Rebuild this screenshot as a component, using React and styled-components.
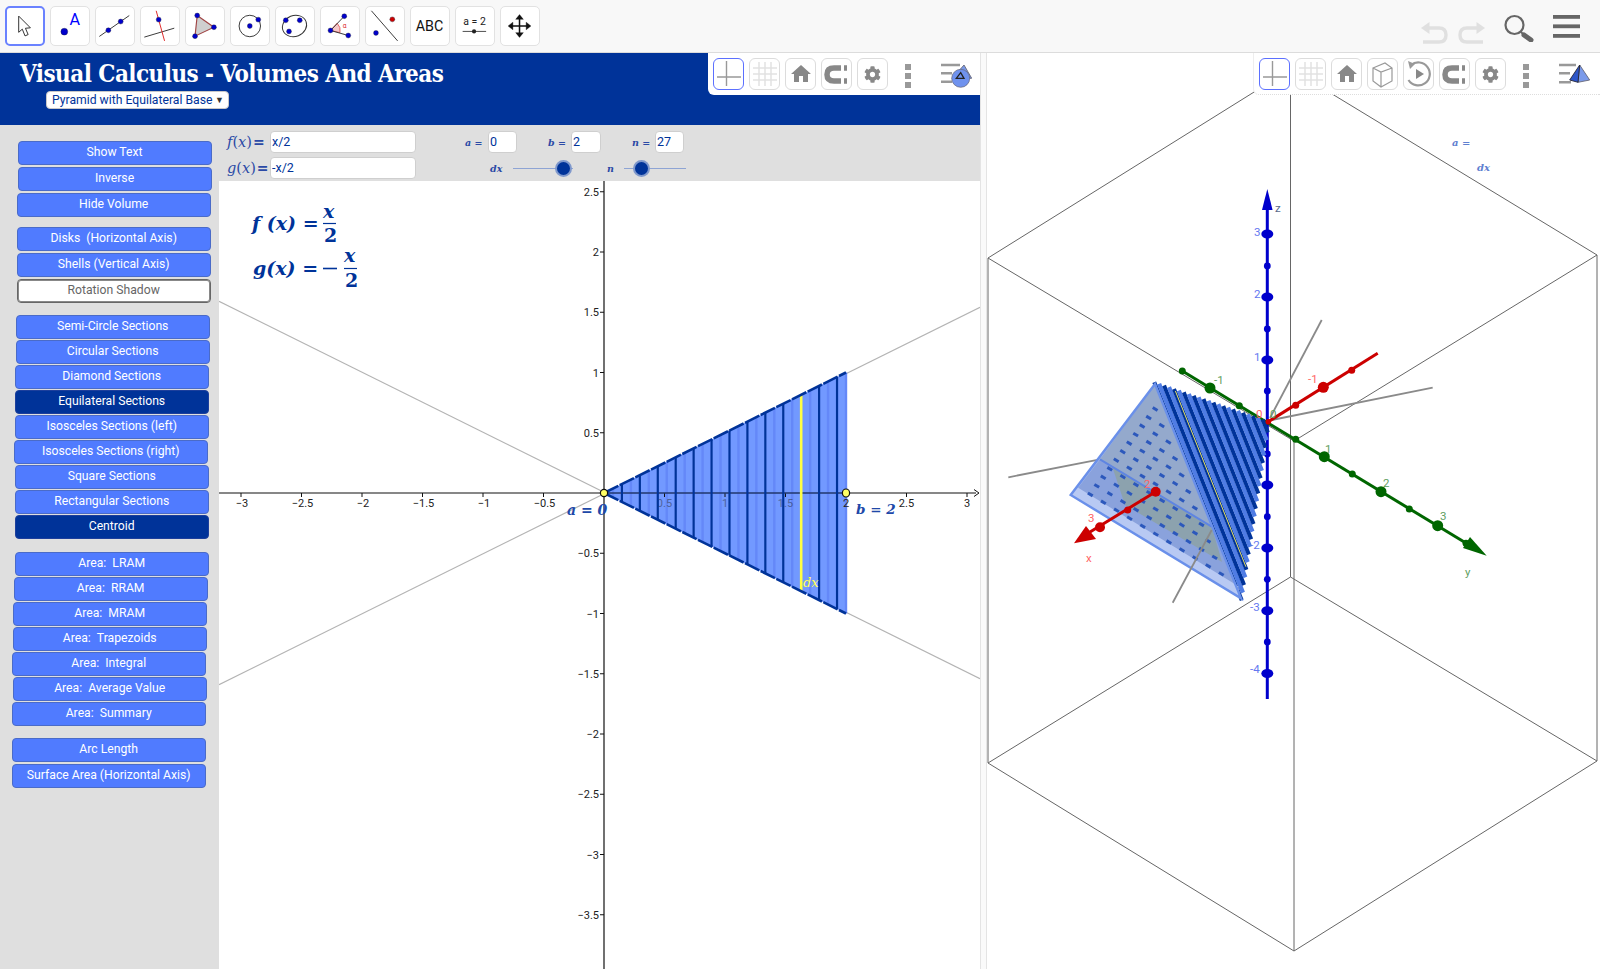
import React from 'react';
import styled, { createGlobalStyle } from 'styled-components';
import { MdHome } from 'react-icons/md';
import { FaCog } from 'react-icons/fa';

const GlobalStyle = createGlobalStyle`
  html, body {
    margin: 0;
    padding: 0;
    background: #fff;
    font-family: Roboto, "Liberation Sans", sans-serif;
  }
`;

const BLUE = '#003399';
const BUTTON_BLUE = '#507bff';
const MATH_FONT = '"DejaVu Serif", "Liberation Serif", serif';

const Page = styled.div`
  width: 1600px;
  height: 969px;
  display: flex;
  flex-direction: column;
  overflow: hidden;
`;

const Toolbar = styled.header`
  height: 53px;
  flex: none;
  box-sizing: border-box;
  display: flex;
  align-items: flex-start;
  gap: 5px;
  padding: 6px 0 0 5px;
  background: #f8f8f8;
  border-bottom: 1px solid #dcdcdc;
`;

const ToolButton = styled.div`
  width: 40px;
  height: 40px;
  box-sizing: border-box;
  flex: none;
  background: #fff;
  border: ${(p) => (p.$active ? '2px solid #6a82ff' : '1px solid #e2e2e2')};
  border-radius: 5px;
  svg {
    display: block;
    width: 100%;
    height: 100%;
  }
`;

const ToolbarActions = styled.div`
  margin-left: auto;
  display: flex;
  align-items: flex-start;
  height: 41px;
  padding: 7px 20px 0 0;
  box-sizing: border-box;
  svg {
    display: block;
    flex: none;
  }
`;

const ActionSlot = styled.div`
  margin-left: ${(p) => p.$left}px;
  margin-top: ${(p) => p.$top}px;
`;

const Workspace = styled.div`
  flex: 1;
  display: flex;
  min-height: 0;
`;

const LeftPane = styled.section`
  position: relative;
  width: 980px;
  flex: none;
  display: flex;
  flex-direction: column;
`;

const Splitter = styled.div`
  width: 7px;
  flex: none;
  background: #fafafa;
  border-left: 1px solid #e4e4e4;
  border-right: 1px solid #e4e4e4;
  box-sizing: border-box;
`;

const RightPane = styled.section`
  position: relative;
  flex: 1;
  overflow: hidden;
`;

const TitleBar = styled.div`
  height: 72px;
  flex: none;
  box-sizing: border-box;
  background: ${BLUE};
  padding: 5px 0 0 20px;
`;

const Title = styled.h1`
  margin: 0;
  color: #fff;
  font: bold 24px/32px "DejaVu Serif Condensed", "DejaVu Serif", serif;
  letter-spacing: -0.55px;
  white-space: nowrap;
`;

const ShapeSelect = styled.div`
  margin: 1px 0 0 26px;
  width: 183px;
  height: 18px;
  box-sizing: border-box;
  display: flex;
  align-items: center;
  justify-content: space-between;
  padding: 0 4px 1px 5px;
  background: #fff;
  border: 1px solid #c8c8c8;
  border-radius: 4px;
  color: ${BLUE};
  font-size: 12.2px;
  white-space: nowrap;
  span:last-child {
    color: #333;
    font-size: 9px;
  }
`;

const Body = styled.div`
  flex: 1;
  display: flex;
  min-height: 0;
`;

const Sidebar = styled.nav`
  width: 219px;
  flex: none;
  box-sizing: border-box;
  background: #dfdfdf;
  padding-top: 16px;
`;

const ButtonGroup = styled.div`
  display: flex;
  flex-direction: column;
  gap: ${(p) => p.$gap}px;
  margin-bottom: ${(p) => p.$after}px;
`;

const SideButton = styled.button`
  width: 194px;
  height: 24px;
  flex: none;
  margin: 0 0 0 ${(p) => p.$left}px;
  padding: 0 0 ${(p) => p.$lift}px;
  box-sizing: border-box;
  border-radius: 4px;
  font: 12.2px Roboto, sans-serif;
  color: ${(p) => (p.$variant === 'off' ? '#666' : '#fff')};
  background: ${(p) =>
    p.$variant === 'on' ? BLUE : p.$variant === 'off' ? '#fff' : BUTTON_BLUE};
  border: ${(p) =>
    p.$variant === 'off'
      ? '1px solid #666'
      : p.$variant === 'on'
      ? '1px solid #1d3f9c'
      : '1px solid #4a6bc8'};
  box-shadow: ${(p) => (p.$variant === 'off' ? 'inset 0 0 0 1px #888' : 'none')};
`;

const Content = styled.div`
  flex: 1;
  display: flex;
  flex-direction: column;
  min-width: 0;
`;

const InputStrip = styled.div`
  height: 56px;
  flex: none;
  box-sizing: border-box;
  background: #dfdfdf;
  padding: 6px 0 0 9px;
  display: flex;
  flex-direction: column;
  gap: 4px;
`;

const InputRow = styled.div`
  display: flex;
  align-items: center;
  height: 22px;
`;

const FnLabel = styled.span`
  width: 43px;
  margin-left: -1px;
  flex: none;
  font: italic 14.5px ${MATH_FONT};
  color: #2b4aa6;
  white-space: nowrap;
  i {
    font-style: normal;
  }
  b {
    font-style: normal;
    font-weight: bold;
    font-size: 14px;
    margin-left: 1px;
  }
`;

const ParamLabel = styled.span`
  width: ${(p) => p.$width}px;
  margin-left: ${(p) => p.$left}px;
  flex: none;
  font: italic bold 9.5px ${MATH_FONT};
  color: #2b4aa6;
  white-space: nowrap;
`;

const Field = styled.input`
  width: ${(p) => p.$width}px;
  height: 22px;
  flex: none;
  box-sizing: border-box;
  margin-left: ${(p) => p.$left || 0}px;
  padding: 0 0 1px 1px;
  background: #fff;
  border: 1px solid #cfcfcf;
  border-radius: 4px;
  outline: none;
  font: 12.5px Roboto, sans-serif;
  color: ${BLUE};
`;

const SliderTrack = styled.div`
  position: relative;
  width: ${(p) => p.$width}px;
  height: 1px;
  margin-left: ${(p) => p.$left}px;
  flex: none;
  background: #8ea4d4;
`;

const SliderKnob = styled.span`
  position: absolute;
  top: -8px;
  width: 13px;
  height: 13px;
  border-radius: 50%;
  border: 2px solid #7f98cc;
  background: ${BLUE};
`;

const PlotArea = styled.div`
  flex: 1;
  min-height: 0;
  background: #fff;
  svg {
    display: block;
    width: 100%;
    height: 100%;
  }
`;

const StyleBar = styled.div`
  position: absolute;
  top: 0;
  right: 0;
  height: 42px;
  box-sizing: border-box;
  display: flex;
  align-items: flex-start;
  gap: 5px;
  padding: 5px ${(p) => (p.$framed ? 2 : 0)}px 0 5px;
  background: #fff;
  border-bottom-left-radius: 6px;
  border-bottom: ${(p) => (p.$framed ? '1px dotted #ddd' : 'none')};
  border-left: ${(p) => (p.$framed ? '1px solid #eee' : 'none')};
`;

const StyleButton = styled.div`
  width: 31px;
  height: 32px;
  box-sizing: border-box;
  flex: none;
  display: flex;
  align-items: center;
  justify-content: center;
  border: 1px solid ${(p) => (p.$active ? '#5c70ff' : '#dcdcdc')};
  border-radius: 6px;
  color: #888;
  svg {
    display: block;
  }
`;

const MoreDots = styled.div`
  width: 6px;
  height: 24px;
  margin: 6px 0 0 12px;
  flex: none;
  display: flex;
  flex-direction: column;
  justify-content: space-between;
  span {
    height: 6px;
    background: #999;
  }
`;

const PerspectiveIcon = styled.div`
  width: 31px;
  height: 28px;
  margin: 3px 8px 0 25px;
  flex: none;
`;

const SceneCanvas = styled.svg`
  display: block;
  width: 100%;
  height: 100%;
`;

/* toolbar icons, all drawn on a 40 x 40 box */
const Dot = ({ x, y, r = 2.6, c = '#0000cc' }) => (
  <circle cx={x} cy={y} r={r} fill={c} stroke="#223" strokeWidth="0.4" />
);

const toolIcons = [
  <path key="move" d="M13 9 L13 27 L17 23.5 L20 31 L23.5 29.5 L20.5 22.5 L26 22 Z" fill="#fff" stroke="#333" strokeWidth="1.1" />,
  <g key="point">
    <Dot x={14} y={26} r={3.6} />
    <text x={19.5} y={19} fontSize="17" fontFamily="Roboto, sans-serif" fill="#0000ff">A</text>
  </g>,
  <g key="line">
    <line x1="3.5" y1="31" x2="35" y2="9" stroke="#333" strokeWidth="1" />
    <Dot x={13} y={24.5} />
    <Dot x={26} y={15.3} />
  </g>,
  <g key="perp">
    <line x1="3.5" y1="31.7" x2="35" y2="22.3" stroke="#333" strokeWidth="1" />
    <line x1="16" y1="4" x2="24.8" y2="35.7" stroke="#dd2222" strokeWidth="1" />
    <Dot x={18.6} y={13.3} />
  </g>,
  <g key="poly">
    <polygon points="11.8,9 29.4,21.3 9.5,30.7" fill="#cfcfcf" stroke="#a04444" strokeWidth="1.2" />
    <Dot x={11.8} y={9} />
    <Dot x={29.4} y={21.3} />
    <Dot x={9.5} y={30.7} />
  </g>,
  <g key="circle">
    <circle cx="19.8" cy="20" r="11.3" fill="none" stroke="#333" strokeWidth="1" />
    <Dot x={19.8} y={20} />
    <Dot x={28.7} y={13.3} />
  </g>,
  <g key="conic">
    <ellipse cx="19.5" cy="20" rx="13" ry="11" transform="rotate(-22 19.5 20)" fill="none" stroke="#333" strokeWidth="1" />
    <Dot x={10.3} y={14} />
    <Dot x={25} y={14} />
    <Dot x={13.7} y={25.7} />
  </g>,
  <g key="angle">
    <path d="M10 24.7 L17 17 A11 11 0 0 1 20 27 Z" fill="#f5c8c8" stroke="#dd4444" strokeWidth="0.8" />
    <path d="M24.5 9.7 L10 24.7 L28.7 30" fill="none" stroke="#333" strokeWidth="1" />
    <Dot x={24.5} y={9.7} />
    <Dot x={10} y={24.7} />
    <Dot x={28.7} y={30} />
    <text x={23} y={22} fontSize="7" fontFamily="Roboto, sans-serif" fill="#dd3333">α</text>
  </g>,
  <g key="reflect">
    <line x1="5.7" y1="4" x2="33.3" y2="35.7" stroke="#333" strokeWidth="1" />
    <Dot x={27.7} y={13} c="#cc0000" />
    <Dot x={10.5} y={27.3} />
  </g>,
  <text key="abc" x="19.5" y="25.5" textAnchor="middle" fontSize="15" fontFamily="Roboto, sans-serif" fill="#111">ABC</text>,
  <g key="slider">
    <text x="19.5" y="18.5" textAnchor="middle" fontSize="11" fontFamily="Roboto, sans-serif" fill="#222">a = 2</text>
    <line x1="7" y1="25.7" x2="31.7" y2="25.7" stroke="#444" strokeWidth="1" />
    <circle cx="19" cy="25.7" r="2.2" fill="#222" />
  </g>,
  <g key="pan" fill="#111" stroke="#111">
    <path d="M19.5 11 V29 M10.5 20 H28.5" strokeWidth="1.6" />
    <path d="M19.5 8 L15.5 13 H23.5 Z M19.5 32 L15.5 27 H23.5 Z M7.5 20 L12.5 16 V24 Z M31.5 20 L26.5 16 V24 Z" strokeWidth="0.4" />
  </g>,
];

const UndoIcon = ({ flip }) => (
  <svg width="27" height="22" viewBox="0 0 27 22" style={flip ? { transform: 'scaleX(-1)' } : undefined}>
    <path d="M8 6 H18 Q25 6 25 13 Q25 20 18 20 H2" fill="none" stroke="#e0e0e0" strokeWidth="3.4" />
    <path d="M0 6 L8.5 0 V12 Z" fill="#e0e0e0" />
  </svg>
);

const SearchIcon = () => (
  <svg width="30" height="29" viewBox="0 0 30 29">
    <circle cx="10.5" cy="12" r="9" fill="none" stroke="#666" strokeWidth="2.2" />
    <path d="M17 19 L19 21 M20 22 L26.5 26.5" stroke="#666" strokeWidth="1.8" fill="none" />
    <path d="M20 22 L27 27" stroke="#666" strokeWidth="5" strokeLinecap="round" />
  </svg>
);

const MenuIcon = () => (
  <svg width="27" height="23" viewBox="0 0 27 23">
    <rect y="0" width="27" height="3.8" fill="#666" />
    <rect y="9.4" width="27" height="3.8" fill="#666" />
    <rect y="19" width="27" height="3.8" fill="#666" />
  </svg>
);

/* style bar icons */
const AxesGlyph = () => (
  <svg width="29" height="30" viewBox="0 0 29 30">
    <path d="M12.5 2 V27 M3 18 H27" stroke="#999" strokeWidth="1.4" fill="none" />
  </svg>
);

const GridGlyph = () => (
  <svg width="29" height="30" viewBox="0 0 29 30">
    <path d="M9 3 V27 M15 3 V27 M21 3 V27 M3 9 H27 M3 15 H27 M3 21 H27" stroke="#e2e2e2" strokeWidth="1.5" fill="none" />
  </svg>
);

const CubeGlyph = () => (
  <svg width="29" height="30" viewBox="0 0 29 30">
    <path d="M5 9 L17 4 L24 9 V22 L13 28 L5 22 Z M5 9 L13 13 L24 9 M13 13 V28" fill="none" stroke="#999" strokeWidth="1.2" />
  </svg>
);

const RotateGlyph = () => (
  <svg width="29" height="30" viewBox="0 0 29 30">
    <path d="M7 6 A11.5 11.5 0 1 1 4.5 21" fill="none" stroke="#999" strokeWidth="2.2" />
    <path d="M4 2 L11 5 L6 10 Z" fill="#999" />
    <path d="M12 10 L20 15 L12 20 Z" fill="#888" />
  </svg>
);

const MagnetGlyph = () => (
  <svg width="29" height="30" viewBox="0 0 29 30">
    <path d="M25 9 H12 Q5 9 5 15.5 Q5 22 12 22 H25" fill="none" stroke="#888" strokeWidth="5.5" />
    <path d="M19 9 H22 M19 22 H22" stroke="#fff" strokeWidth="6" />
  </svg>
);

const Perspective = ({ solid }) => (
  <PerspectiveIcon>
    <svg width="31" height="28" viewBox="0 0 31 28">
      <path d={solid ? 'M0 4 H17 M0 12.3 H11 M0 21.3 H12' : 'M0 4 H19 M0 12.3 H11 M0 20.7 H11'} stroke="#999" strokeWidth="2.4" />
      {solid ? (
        <g strokeLinejoin="round">
          <polygon points="20.7,4 30.7,19 19,21.3" fill="#7a9aea" stroke="#667" strokeWidth="0.9" />
          <polygon points="20.7,4 10.7,19 19,21.3" fill="#2d55c8" stroke="#223" strokeWidth="0.9" />
        </g>
      ) : (
        <g>
          <polygon points="23,4 30.7,17.3 11.3,17.3" fill="#7a9aea" stroke="#667" strokeWidth="0.9" />
          <circle cx="19.7" cy="17.3" r="9" fill="#6f92ee" stroke="#667" strokeWidth="0.7" />
          <path d="M15.3 17.3 L19.7 11.7 L23 17.3 Z" fill="none" stroke="#222" strokeWidth="1.3" />
        </g>
      )}
    </svg>
  </PerspectiveIcon>
);

const sideGroups = [
  { gap: 2, after: 10, lift: 3, items: [['Show Text', 17.5], ['Inverse', 17.5], ['Hide Volume', 16.7]] },
  { gap: 2, after: 11.5, lift: 3, items: [['Disks  (Horizontal Axis)', 16.7], ['Shells (Vertical Axis)', 16.7], ['Rotation Shadow', 16.7, 'off']] },
  {
    gap: 1,
    after: 13,
    lift: 1,
    items: [
      ['Semi-Circle Sections', 15.7],
      ['Circular Sections', 15.7],
      ['Diamond Sections', 14.7],
      ['Equilateral Sections', 14.7, 'on'],
      ['Isosceles Sections (left)', 14.7],
      ['Isosceles Sections (right)', 13.7],
      ['Square Sections', 14.7],
      ['Rectangular Sections', 14.7],
      ['Centroid', 14.7, 'on'],
    ],
  },
  {
    gap: 1,
    after: 12,
    lift: 1,
    items: [
      ['Area:  LRAM', 14.7],
      ['Area:  RRAM', 13.7],
      ['Area:  MRAM', 12.7],
      ['Area:  Trapezoids', 12.7],
      ['Area:  Integral', 11.7],
      ['Area:  Average Value', 12.7],
      ['Area:  Summary', 11.7],
    ],
  },
  { gap: 2, after: 0, lift: 2, items: [['Arc Length', 11.7], ['Surface Area (Horizontal Axis)', 11.7]] },
];

/* 2D graph, drawn in page coordinates */
const OX = 604;
const OY = 493;
const UX = 121;
const UY = 120.5;
const px = (x) => OX + x * UX;
const py = (y) => OY - y * UY;
const fmt = (v) => (v < 0 ? '\u2212' + Math.abs(v) : String(v));

const xTicks = [-3, -2.5, -2, -1.5, -1, -0.5, 0.5, 1, 1.5, 2, 2.5, 3];
const yTicks = [2.5, 2, 1.5, 1, 0.5, -0.5, -1, -1.5, -2, -2.5, -3, -3.5];
const slices = Array.from({ length: 27 }, (_, i) => i + 1);

const TickLabel = styled.text`
  font: 11px Roboto, sans-serif;
  fill: #222;
`;

const MathText = styled.text`
  font: italic bold ${(p) => p.$size || 19}px ${MATH_FONT};
  fill: ${(p) => p.$color || BLUE};
`;

const Plot = () => (
  <svg viewBox="219 181 761 788">
    <line x1="219" y1={OY + 191.7} x2="980" y2={OY - 185.7} stroke="#b4b4b4" strokeWidth="1.2" />
    <line x1="219" y1={OY - 191.7} x2="980" y2={OY + 185.7} stroke="#b4b4b4" strokeWidth="1.2" />

    <polygon points={`${OX},${OY} ${px(2)},${py(1)} ${px(2)},${py(-1)}`} fill="#7299ff" />
    {slices.map((k) => {
      const x = (k * 2) / 27;
      if (k % 2 === 0) return null;
      return <line key={k} x1={px(x)} x2={px(x)} y1={py(x / 2)} y2={py(-x / 2)} stroke="#6488f8" strokeWidth="2.4" />;
    })}

    <line x1="219" y1={OY} x2="976" y2={OY} stroke="#111" strokeWidth="1.2" />
    <path d={`M974 ${OY - 3.5} L979 ${OY} L974 ${OY + 3.5}`} fill="none" stroke="#111" strokeWidth="1" />
    <line x1={OX} y1="181" x2={OX} y2="969" stroke="#111" strokeWidth="1.2" />

    {xTicks.map((t) => (
      <g key={t}>
        <line x1={px(t)} x2={px(t)} y1={OY} y2={OY + 4} stroke="#111" />
        <TickLabel x={px(t) + (t < 0 ? 1 : 0)} y={OY + 14} textAnchor="middle" style={t > 0 && t < 2 ? { opacity: 0.45 } : undefined}>
          {fmt(t)}
        </TickLabel>
      </g>
    ))}
    {yTicks.map((t) => (
      <g key={t}>
        <line x1={OX - 4} x2={OX} y1={py(t)} y2={py(t)} stroke="#111" />
        <TickLabel x={OX - 5} y={py(t) + 4} textAnchor="end">{fmt(t)}</TickLabel>
      </g>
    ))}

    <line x1={OX} y1={OY} x2={px(2)} y2={OY} stroke="#2a4a9c" strokeWidth="1.2" strokeDasharray="16 2" />
    {slices.map((k) => {
      if (k % 2 === 1 || k > 26) return null;
      const x = k / 13.5;
      const yellow = k === 22;
      return (
        <line
          key={k}
          x1={px(x)}
          x2={px(x)}
          y1={py(x / 2)}
          y2={py(-x / 2)}
          stroke={yellow ? '#ffff44' : BLUE}
          strokeWidth={yellow ? 2.6 : 2.2}
        />
      );
    })}
    <line x1={OX} y1={OY} x2={px(2)} y2={py(1)} stroke={BLUE} strokeWidth="2.6" strokeDasharray="16 1.5" />
    <line x1={OX} y1={OY} x2={px(2)} y2={py(-1)} stroke={BLUE} strokeWidth="2.6" strokeDasharray="16 1.5" />

    <circle cx={OX} cy={OY} r="3.6" fill="#ffff66" stroke="#111" strokeWidth="1.2" />
    <ellipse cx={px(2)} cy={OY} rx="3.6" ry="4" fill="#ffff66" stroke="#111" strokeWidth="1.2" />
    <MathText x="567" y="515" $size={14} $color="#2048a8">a = 0</MathText>
    <MathText x="856" y="514" $size={13.5} $color="#2048a8">b = 2</MathText>
    <MathText x="803" y="587" $size={13} $color="#ffff55" style={{ fontWeight: 'normal' }}>dx</MathText>

    <MathText x="252" y="230">f (x) =</MathText>
    <MathText x="323" y="218">x</MathText>
    <line x1="323" x2="336" y1="223.5" y2="223.5" stroke={BLUE} strokeWidth="1.2" />
    <MathText x="324" y="242" style={{ fontStyle: 'normal' }}>2</MathText>
    <MathText x="253" y="275">g(x) =</MathText>
    <line x1="323" x2="337" y1="268.5" y2="268.5" stroke={BLUE} strokeWidth="1.6" />
    <MathText x="344" y="262">x</MathText>
    <line x1="344" x2="357" y1="268.5" y2="268.5" stroke={BLUE} strokeWidth="1.2" />
    <MathText x="345" y="287" style={{ fontStyle: 'normal' }}>2</MathText>
  </svg>
);

/* 3D scene, also in page coordinates */
const lerp = (a, b, t) => [a[0] + (b[0] - a[0]) * t, a[1] + (b[1] - a[1]) * t];
const P_A = [1155, 384];
const P_B = [1268.3, 423];
const P_C = [1070.7, 495];
const P_D = [1241, 598.3];
const STRIPES = 23;

const boxLines = [
  [1291, 69, 988, 258], [1291, 69, 1597, 255], [988, 258, 1294, 441], [1597, 255, 1294, 441],
  [988, 258, 988, 763], [1597, 255, 1597, 761], [988, 763, 1294, 951], [1597, 761, 1294, 951],
  [1290.5, 69, 1290.5, 577], [1290.5, 577, 988, 763], [1290.5, 577, 1597, 761], [1294, 441, 1294, 951],
];

const zBig = [234, 297, 360, 485, 548, 610.7, 673.5];
const zSmall = [266, 329, 391, 454, 516.7, 579.3, 642];
const yBig = [[1210, 388], [1324.3, 456.7], [1381, 491.7], [1437.7, 525.7]];
const ySmall = [[1182.3, 371], [1239.3, 405.7], [1295.7, 439.3], [1352.3, 474], [1409.3, 509], [1466, 543.3]];
const xBigTop = [[1323.3, 387.3]];
const xSmallTop = [[1351.7, 370.3], [1295.7, 405.3]];

const AxisLabel = styled.text`
  font: 11.5px Roboto, sans-serif;
  fill: ${(p) => p.$c};
`;

const sectionDashes = () => {
  const dashes = [];
  const n = 13;
  for (let i = 1; i < n; i++) {
    for (let j = 1; j < n - i; j++) {
      const u = i / n;
      const v = j / n;
      const x = P_A[0] + u * (P_C[0] - P_A[0]) + v * (P_D[0] - P_A[0]);
      const y = P_A[1] + u * (P_C[1] - P_A[1]) + v * (P_D[1] - P_A[1]);
      dashes.push(<line key={`${i}-${j}`} x1={x - 2.4} y1={y - 1.45} x2={x + 2.4} y2={y + 1.45} />);
    }
  }
  return dashes;
};

const Scene = () => (
  <SceneCanvas viewBox="987 53 613 916">
    {boxLines.map((l, i) => (
      <line key={i} x1={l[0]} y1={l[1]} x2={l[2]} y2={l[3]} stroke="#666" strokeWidth="1" />
    ))}

    <line x1="1321.7" y1="320" x2="1270" y2="418" stroke="#8a8a8a" strokeWidth="1.8" />
    <line x1="1271.7" y1="420" x2="1432.7" y2="387.7" stroke="#8a8a8a" strokeWidth="1.8" />
    <line x1="1008.3" y1="477.3" x2="1100" y2="459.3" stroke="#8a8a8a" strokeWidth="1.8" />

    <line x1="1267.3" y1="205" x2="1267.3" y2="699" stroke="#0000cc" strokeWidth="3" />
    <polygon points="1267.3,189 1262,210 1272.6,210" fill="#0000cc" />
    {zBig.map((y) => <ellipse key={y} cx="1267.3" cy={y} rx="6" ry="4.5" fill="#0000cc" />)}
    {zSmall.map((y) => <circle key={y} cx="1267.3" cy={y} r="3.4" fill="#0000cc" />)}
    <AxisLabel x="1254" y="236" $c="#6478f0">3</AxisLabel>
    <AxisLabel x="1254" y="298" $c="#6478f0">2</AxisLabel>
    <AxisLabel x="1254" y="361" $c="#6478f0">1</AxisLabel>
    <AxisLabel x="1250" y="549" $c="#6478f0">-2</AxisLabel>
    <AxisLabel x="1250" y="611" $c="#6478f0">-3</AxisLabel>
    <AxisLabel x="1250" y="673" $c="#6478f0">-4</AxisLabel>
    <AxisLabel x="1275" y="212" $c="#5a6a8a">z</AxisLabel>

    <line x1="1182.3" y1="371" x2="1470" y2="545.5" stroke="#006600" strokeWidth="3" />
    <polygon points="1486.7,555.7 1463,548 1470,537" fill="#006600" />
    {yBig.map((p) => <circle key={p[0]} cx={p[0]} cy={p[1]} r="5.5" fill="#006600" />)}
    {ySmall.map((p) => <circle key={p[0]} cx={p[0]} cy={p[1]} r="3.5" fill="#006600" />)}
    <AxisLabel x="1214" y="384" $c="#5fa05f">-1</AxisLabel>
    <AxisLabel x="1325" y="453" $c="#5fa05f">1</AxisLabel>
    <AxisLabel x="1383" y="487" $c="#5fa05f">2</AxisLabel>
    <AxisLabel x="1440" y="520" $c="#5fa05f">3</AxisLabel>
    <AxisLabel x="1465" y="576" $c="#5fa05f">y</AxisLabel>

    <line x1="1377.7" y1="353.3" x2="1268.3" y2="421.7" stroke="#cc0000" strokeWidth="3" />
    {xBigTop.map((p) => <circle key={p[0]} cx={p[0]} cy={p[1]} r="5.5" fill="#cc0000" />)}
    {xSmallTop.map((p) => <circle key={p[0]} cx={p[0]} cy={p[1]} r="3.5" fill="#cc0000" />)}
    <AxisLabel x="1308" y="383" $c="#ff6666">-1</AxisLabel>

    {Array.from({ length: STRIPES }, (_, i) => {
      const t = i / STRIPES;
      const p1 = lerp(P_A, P_B, t);
      const p2 = lerp(P_D, P_B, t);
      const dark = i % 2 === 0;
      return (
        <line
          key={i}
          x1={p1[0]}
          y1={p1[1]}
          x2={p2[0]}
          y2={p2[1]}
          stroke={dark ? BLUE : '#4f7ce4'}
          strokeWidth={dark ? 4 : 4.2}
          strokeLinecap="square"
        />
      );
    })}
    <line
      x1={lerp(P_A, P_B, 0.18)[0]}
      y1={lerp(P_A, P_B, 0.18)[1]}
      x2={lerp(P_D, P_B, 0.18)[0]}
      y2={lerp(P_D, P_B, 0.18)[1]}
      stroke="#e8e060"
      strokeWidth="1"
    />

    <polygon points={[P_A, P_C, P_D].map((p) => p.join(',')).join(' ')} fill="#a5baea" />
    <polygon points="1155,384 1211.7,526.7 1100,459.3" fill="#94a9cc" />
    <polygon points="1100,459.3 1211.7,526.7 1238,590 1075,492" fill="#8aa2dc" />
    <polygon points="1112,466 1211.7,526.7 1222,562 1125,505" fill="#8ca2ae" />
    <polygon points="1071,495 1241,598 1238,586 1077,487" fill="#b8c9f3" />
    <g stroke="#2c58bc" strokeWidth="3">{sectionDashes()}</g>
    <line x1="1100" y1="459.3" x2="1211.7" y2="526.7" stroke="#5f85e2" strokeWidth="2" />
    <polygon points={[P_A, P_C, P_D].map((p) => p.join(',')).join(' ')} fill="none" stroke="#6a90ea" strokeWidth="2.4" />
    <line x1="1211.7" y1="530" x2="1172.7" y2="602.7" stroke="#8a8a8a" strokeWidth="1.8" />

    <line x1="1155.7" y1="491.7" x2="1090" y2="532" stroke="#cc0000" strokeWidth="3" />
    <polygon points="1074,543.3 1086,526 1096,539" fill="#cc0000" />
    <circle cx="1155.7" cy="491.7" r="5" fill="#cc0000" />
    <circle cx="1127.7" cy="510" r="3.5" fill="#cc0000" />
    <circle cx="1100" cy="527.3" r="5" fill="#cc0000" />
    <AxisLabel x="1144" y="488" $c="#ff6666">2</AxisLabel>
    <AxisLabel x="1088" y="522" $c="#ff6666">3</AxisLabel>
    <AxisLabel x="1086" y="562" $c="#ff6666">x</AxisLabel>

    <circle cx="1268.3" cy="421.7" r="2.8" fill="#cc0000" />
    <AxisLabel x="1256" y="418" $c="#ff6666">0</AxisLabel>
    <AxisLabel x="1270" y="418" $c="#5fa05f">0</AxisLabel>

    <MathText x="1452" y="146" $size={10} $color="#6080d0">a =</MathText>
    <MathText x="1477" y="171" $size={10} $color="#6080d0">dx</MathText>
  </SceneCanvas>
);

const App = () => (
  <Page>
    <GlobalStyle />
    <Toolbar>
      {toolIcons.map((icon, i) => (
        <ToolButton key={i} $active={i === 0}>
          <svg viewBox="0 0 40 40">{icon}</svg>
        </ToolButton>
      ))}
      <ToolbarActions>
        <ActionSlot $left={0} $top={9}><UndoIcon /></ActionSlot>
        <ActionSlot $left={10} $top={9}><UndoIcon flip /></ActionSlot>
        <ActionSlot $left={19} $top={0}><SearchIcon /></ActionSlot>
        <ActionSlot $left={19} $top={2}><MenuIcon /></ActionSlot>
      </ToolbarActions>
    </Toolbar>
    <Workspace>
      <LeftPane>
        <TitleBar>
          <Title>Visual Calculus - Volumes And Areas</Title>
          <ShapeSelect>
            <span>Pyramid with Equilateral Base</span>
            <span>▼</span>
          </ShapeSelect>
        </TitleBar>
        <Body>
          <Sidebar>
            {sideGroups.map((group, i) => (
              <ButtonGroup key={i} $gap={group.gap} $after={group.after}>
                {group.items.map(([label, left, variant]) => (
                  <SideButton key={label} $left={left} $lift={group.lift} $variant={variant}>
                    {label.replace('  ', '\u00a0\u00a0')}
                  </SideButton>
                ))}
              </ButtonGroup>
            ))}
          </Sidebar>
          <Content>
            <InputStrip>
              <InputRow>
                <FnLabel>f<i>(</i>x<i>)</i><b>=</b></FnLabel>
                <Field $width={146} defaultValue="x/2" />
                <ParamLabel $width={22} $left={49}>a =</ParamLabel>
                <Field $width={29} $left={1} defaultValue="0" />
                <ParamLabel $width={22} $left={31}>b =</ParamLabel>
                <Field $width={30} $left={1} defaultValue="2" />
                <ParamLabel $width={22} $left={31}>n =</ParamLabel>
                <Field $width={29} $left={1} defaultValue="27" />
              </InputRow>
              <InputRow>
                <FnLabel>g<i>(</i>x<i>)</i><b>=</b></FnLabel>
                <Field $width={146} defaultValue="-x/2" />
                <ParamLabel $width={14} $left={74}>dx</ParamLabel>
                <SliderTrack $width={60} $left={9}>
                  <SliderKnob style={{ left: 42 }} />
                </SliderTrack>
                <ParamLabel $width={8} $left={34}>n</ParamLabel>
                <SliderTrack $width={62} $left={9}>
                  <SliderKnob style={{ left: 9 }} />
                </SliderTrack>
              </InputRow>
            </InputStrip>
            <PlotArea>
              <Plot />
            </PlotArea>
          </Content>
        </Body>
        <StyleBar>
          <StyleButton $active><AxesGlyph /></StyleButton>
          <StyleButton><GridGlyph /></StyleButton>
          <StyleButton><MdHome size={24} /></StyleButton>
          <StyleButton><MagnetGlyph /></StyleButton>
          <StyleButton><FaCog size={17} /></StyleButton>
          <MoreDots><span /><span /><span /></MoreDots>
          <Perspective />
        </StyleBar>
      </LeftPane>
      <Splitter />
      <RightPane>
        <Scene />
        <StyleBar $framed>
          <StyleButton $active><AxesGlyph /></StyleButton>
          <StyleButton><GridGlyph /></StyleButton>
          <StyleButton><MdHome size={24} /></StyleButton>
          <StyleButton><CubeGlyph /></StyleButton>
          <StyleButton><RotateGlyph /></StyleButton>
          <StyleButton><MagnetGlyph /></StyleButton>
          <StyleButton><FaCog size={17} /></StyleButton>
          <MoreDots><span /><span /><span /></MoreDots>
          <Perspective solid />
        </StyleBar>
      </RightPane>
    </Workspace>
  </Page>
);

export default App;
